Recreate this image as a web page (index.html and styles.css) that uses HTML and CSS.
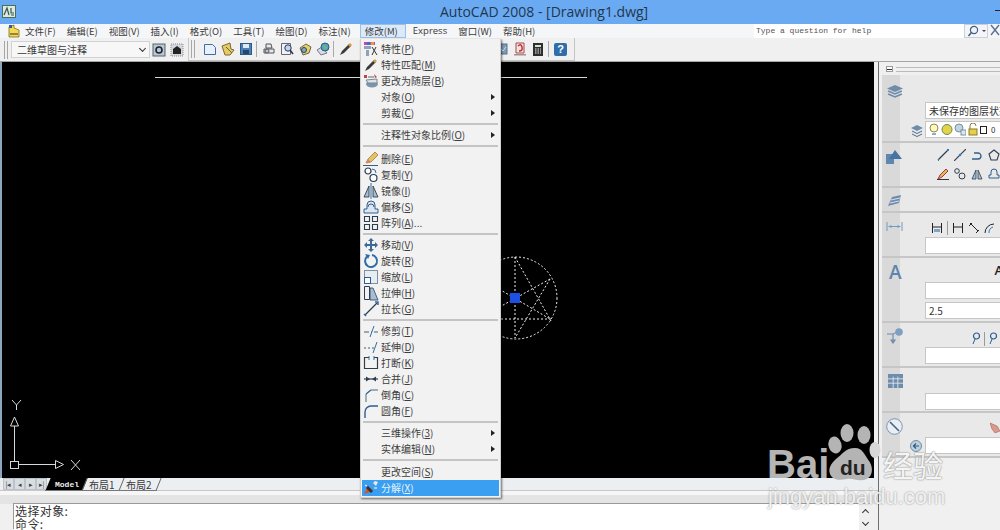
FILE: index.html
```html
<!DOCTYPE html>
<html lang="zh">
<head>
<meta charset="utf-8">
<title>AutoCAD 2008</title>
<link rel="stylesheet" href="styles.css">
</head>
<body>
<div class="app">
  <header class="title">
    <svg class="app-icon" width="14" height="13" viewBox="0 0 14 13"><rect x=".5" y=".5" width="13" height="12" fill="#dfe8e0" stroke="#47705a"/><path d="M2 10 5 3l2 7M9 3v5h3M9 10h3" fill="none" stroke="#2f5a48" stroke-width="1.2"/></svg>
    <span class="title-text">AutoCAD 2008 - [Drawing1.dwg]</span>
    <span class="win-min"></span>
  </header>

  <nav class="menubar">
    <svg class="doc-icon" width="14" height="14" viewBox="0 0 14 14"><path d="M2 3 7 1v3l5 2v7H2z" fill="#f5d94a" stroke="#6b5a1a" stroke-width=".7"/><path d="M2 1h3v3H2z" fill="#3a5a9a"/><path d="M3 10h8" stroke="#333"/></svg>
    <span class="mi">文件(F)</span>
    <span class="mi">编辑(E)</span>
    <span class="mi">视图(V)</span>
    <span class="mi">插入(I)</span>
    <span class="mi">格式(O)</span>
    <span class="mi">工具(T)</span>
    <span class="mi">绘图(D)</span>
    <span class="mi">标注(N)</span>
    <span class="mi mi-open">修改(M)</span>
    <span class="mi mi-en">Express</span>
    <span class="mi">窗口(W)</span>
    <span class="mi">帮助(H)</span>
    <div class="help">
      <span class="help-input">Type a question for help</span>
      <span class="help-btn"><svg width="12" height="12" viewBox="0 0 12 12"><circle cx="7" cy="5" r="3.6" fill="#eef3fb" stroke="#47607e" stroke-width="1.2"/><path d="M4.4 7.6 1.5 11" stroke="#47607e" stroke-width="1.6"/></svg><i class="tiny-down"></i></span>
      <span class="help-btn2"><svg width="10" height="12" viewBox="0 0 10 12"><path d="M1 1 9 11M9 1 1 11" stroke="#5a7390" stroke-width="1.4"/></svg></span>
    </div>
  </nav>

  <div class="toolbars">
    <div class="tb tb-first">
      <span class="grip"></span>
      <div class="combo"><span>二维草图与注释</span><i class="chev"></i></div>
      <svg class="ti" width="14" height="14" viewBox="0 0 14 14"><rect x="1" y="1" width="12" height="12" fill="#b9c6d4" stroke="#566"/><circle cx="7" cy="7" r="3" fill="none" stroke="#223" stroke-width="1.6"/></svg>
      <svg class="ti" width="14" height="14" viewBox="0 0 14 14"><rect x="1" y="1" width="12" height="12" fill="#d4d8dc" stroke="#889" stroke-dasharray="1 1"/><path d="M3 11V6l4-3 4 3v5z" fill="#222"/></svg>
    </div>
    <div class="tb tb-second">
      <span class="grip"></span>
      <svg class="ti" width="14" height="14" viewBox="0 0 14 14"><path d="M1.500 2.500h8l3 3v7h-11z" fill="#e8f1fb" stroke="#3b6ea5"/></svg>
      <svg class="ti" width="14" height="14" viewBox="0 0 14 14"><path d="M1 4l8-3 1 6 3 1-4 5H4z" fill="#e9c866" stroke="#7a6a30"/><path d="M5 5l6 6" stroke="#3a7a3a"/></svg>
      <svg class="ti" width="14" height="14" viewBox="0 0 14 14"><rect x="1.500" y="1.500" width="11" height="11" fill="#4f7fb5" stroke="#2b5a8a"/><rect x="4" y="2" width="6" height="4" fill="#dfeaf5"/><rect x="4" y="8" width="6" height="4" fill="#24476e"/></svg>
      <i class="sep"></i>
      <svg class="ti" width="14" height="14" viewBox="0 0 14 14"><path d="M4 2h5l1 4H4zM2 7h10v4H2z" fill="#e6e9ee" stroke="#555"/><circle cx="5" cy="9" r="2" fill="#b9c6d4" stroke="#555"/></svg>
      <svg class="ti" width="14" height="14" viewBox="0 0 14 14"><path d="M1.500 1.500h9v11h-9z" fill="#eef2f6" stroke="#667"/><circle cx="8" cy="6" r="3.200" fill="#bcd6ee" stroke="#335"/><path d="M10 8l3 4" stroke="#335" stroke-width="1.500"/></svg>
      <svg class="ti" width="14" height="14" viewBox="0 0 14 14"><path d="M2 6l6-4 5 3-2 6-6 2z" fill="#e7cf60" stroke="#665"/><circle cx="6" cy="8" r="2.500" fill="#7fa7cc" stroke="#345"/></svg>
      <svg class="ti" width="14" height="14" viewBox="0 0 14 14"><path d="M1 8l5-3 5 6-6 2z" fill="#d9dde2" stroke="#778"/><circle cx="9" cy="5" r="4" fill="#55a3c9" stroke="#2a5d7a"/><path d="M7 3l4 2-2 3z" fill="#85b35a"/></svg>
      <i class="sep"></i>
      <svg class="ti" width="14" height="14" viewBox="0 0 14 14"><path d="M1 13l2-4 7-7 2 2-7 7z" fill="#3b3b3b"/><path d="M9 3l2-2 2 2-2 2z" fill="#d79a3a"/></svg>
      <span class="tb-hidden"></span>
      <svg class="ti ti-cut" width="14" height="14" viewBox="0 0 14 14"><rect x="1" y="2" width="12" height="10" fill="#7c9bb8" stroke="#56718c"/><path d="M2 10l4-4 3 3 3-4" fill="none" stroke="#cfe0ee"/></svg>
      <svg class="ti" width="14" height="14" viewBox="0 0 14 14"><path d="M3 1h8v10H3z" fill="#f5e4e4" stroke="#a04a4a"/><path d="M1 12h12v1.500H1z" fill="#aa8e8e"/><path d="M5 4q3-3 4 1t-3 4" fill="none" stroke="#c2302f" stroke-width="1.500"/></svg>
      <svg class="ti" width="14" height="14" viewBox="0 0 14 14"><rect x="2" y="1" width="10" height="13" fill="#2e2e2e"/><rect x="4" y="3" width="6" height="2" fill="#cfe5cf"/><path d="M4 7h6M4 9h6M4 11h6" stroke="#eee" stroke-dasharray="1.500 1"/></svg>
      <i class="sep"></i>
      <span class="help-q">?</span>
    </div>
  </div>

  <div class="main">
    <div class="work">
      <section class="canvas">
        <svg class="drawing" width="872" height="416" viewBox="0 0 872 416">
          <path d="M153 15.500h432" stroke="#d8d8d8" fill="none"/>
          <g fill="none" stroke="#f0f0f0" stroke-dasharray="2 2">
            <circle cx="514" cy="236" r="41"/>
            <path d="M513 195v81M513 195l36 64M548 217l-35 59M475 257h75M548 217l-72 40M480 217l68 40"/>
          </g>
          <rect x="508" y="231" width="10" height="10" fill="#1d4fe0"/>
          <g fill="none" stroke="#d8d8d8">
            <path d="M12.500 364v35M8.500 364h8L12.500 355zM16 402.500h37M53.500 398.500v8l8-4z"/>
            <rect x="8.500" y="399.500" width="8" height="7"/>
            <path d="M10 338l4.500 5 4.500-5M14.500 343v5M69 398l9 10M78 398l-9 10"/>
          </g>
        </svg>
      </section>
      <div class="tabs">
        <div class="nav-btns">
          <b class="nb">|◂</b><b class="nb">◂</b><b class="nb">▸</b><b class="nb">▸|</b>
        </div>
        <span class="tab tab-active">Model</span>
        <span class="tab">布局1</span>
        <span class="tab">布局2</span>
      </div>
      <div class="cmd-gap"></div>
      <div class="command">
        <div class="cmd-text">选择对象:<br>命令:</div>
        <div class="cmd-scroll"><i class="chev chev-up"></i><i class="chev"></i></div>
      </div>
    </div>

    <aside class="panel">
      <div class="panel-head"><span class="collapse"></span><span class="head-grip"></span></div>

      <div class="sect s-layers">
        <div class="strip"><svg width="16" height="14" viewBox="0 0 14 14" preserveAspectRatio="none"><path d="M7 1l7 3.500L7 8 0 4.500z" fill="#6e8cab"/><path d="M1 7l6 3 6-3M1 10l6 3 6-3" fill="none" stroke="#6e8cab" stroke-width="1.500"/></svg></div>
        <div class="body">
          <div class="field f-top">未保存的图层状态</div>
          <div class="layer-row">
            <svg class="layer-ico" width="14" height="14" viewBox="0 0 14 14"><path d="M7 2l6 3-6 3-6-3z" fill="#6e8cab"/><path d="M2 8l5 2.500L12 8M2 11l5 2.500L12 11" fill="none" stroke="#4c6a88"/></svg>
            <div class="field layer-field">
              <svg width="12" height="13" viewBox="0 0 12 13"><circle cx="6" cy="5" r="4" fill="#fff8c0" stroke="#8a8a50"/><path d="M4 10h4v2H4z" fill="#9ab"/></svg>
              <svg width="12" height="13" viewBox="0 0 12 13"><circle cx="6" cy="6.500" r="5" fill="#e3d34a" stroke="#6a8a50"/></svg>
              <svg width="12" height="13" viewBox="0 0 12 13"><circle cx="5" cy="5" r="4" fill="#c2d4e2" stroke="#78909c"/><rect x="7" y="7" width="5" height="5" fill="#dde6ec" stroke="#78909c"/></svg>
              <svg width="12" height="13" viewBox="0 0 12 13"><path d="M3 6V3a3 3 0 0 1 6 0" fill="none" stroke="#8a7a30"/><rect x="2" y="6" width="8" height="6" fill="#e6d044" stroke="#8a7a30"/></svg>
              <i class="swatch"></i><span class="layer-name">0</span>
            </div>
          </div>
        </div>
      </div>

      <div class="sect s-draw">
        <div class="strip"><svg width="17" height="15" viewBox="0 0 17 15"><path d="M0 5h8v10H0z" fill="#5f86ad"/><path d="M9 1l7 9H3z" fill="#4674a2"/></svg></div>
        <div class="body icons-body">
          <div class="icon-row">
            <svg width="12" height="12" viewBox="0 0 12 12"><path d="M1 11 11 1" stroke="#2e3e50" stroke-width="1.200"/><path d="M1 11h1M10 1h2" stroke="#2e7bc4" stroke-width="2"/></svg>
            <svg width="12" height="12" viewBox="0 0 12 12"><path d="M0 12 12 0" stroke="#2e3e50" stroke-width="1.200"/><circle cx="6" cy="6" r="1.200" fill="#2e7bc4"/></svg>
            <svg width="12" height="12" viewBox="0 0 12 12"><path d="M1 10h6a3 3 0 0 0 0-6H3" fill="none" stroke="#2e5e90" stroke-width="1.300"/></svg>
            <svg width="12" height="12" viewBox="0 0 12 12"><path d="M6 1l5 4-2 6H3L1 5z" fill="none" stroke="#2e3e50" stroke-width="1.100"/></svg>
          </div>
          <div class="icon-row">
            <svg width="12" height="12" viewBox="0 0 12 12"><path d="M1 11l2-4 6-6 2 2-6 6z" fill="#e0bc4a" stroke="#a35"/><path d="M0 11.500h12" stroke="#333"/></svg>
            <svg width="12" height="12" viewBox="0 0 12 12"><circle cx="3" cy="3" r="2.300" fill="none" stroke="#2e3e50"/><circle cx="8" cy="8" r="3" fill="none" stroke="#2e3e50"/></svg>
            <svg width="12" height="12" viewBox="0 0 12 12"><path d="M5 2 1 11h4zM7 2l4 9H7z" fill="#a7bed3" stroke="#2e3e50" stroke-width=".8"/></svg>
            <svg width="12" height="12" viewBox="0 0 12 12"><path d="M1 10V7h2V4a3 3 0 0 1 6 0v3h2v3z" fill="none" stroke="#2e5e90"/></svg>
          </div>
        </div>
      </div>

      <div class="sect s-hatch">
        <div class="strip"><svg width="15" height="13" viewBox="0 0 15 13"><path d="M1 12 5 3l9-2-2 8z" fill="#6e8cab"/><path d="M4 6l9-2M3 9l9-2" stroke="#dde"/></svg></div>
        <div class="body"></div>
      </div>

      <div class="sect s-dim">
        <div class="strip"><svg width="17" height="9" viewBox="0 0 16 9"><path d="M.5 0v9M15.500 0v9M2 4.500h12" stroke="#6e9cc4"/><path d="M2 4.500 5 3v3zM14 4.500 11 3v3z" fill="#6e9cc4"/></svg></div>
        <div class="body">
          <div class="icon-row dim-row">
            <svg width="12" height="12" viewBox="0 0 12 12"><path d="M1.500 1v10M10.500 1v10M2 5h8" stroke="#222"/><rect x="3" y="7" width="6" height="3" fill="#7ea4c8"/></svg>
            <i class="vsep"></i>
            <svg width="12" height="12" viewBox="0 0 12 12"><path d="M1.500 1v10M10.500 1v10M2 5h8" stroke="#222"/></svg>
            <svg width="12" height="12" viewBox="0 0 12 12"><path d="M2 1l8 8M1 4l3-3M8 11l3-3" stroke="#222"/></svg>
            <svg width="12" height="12" viewBox="0 0 12 12"><path d="M1 11a9 9 0 0 1 9-9" fill="none" stroke="#222"/><path d="M5 11a6 6 0 0 1 4-6" fill="none" stroke="#2e7bc4"/></svg>
          </div>
          <div class="field f-dim"></div>
        </div>
      </div>

      <div class="sect s-text">
        <div class="strip"><span class="strip-a">A</span></div>
        <div class="body">
          <div class="text-a">A</div>
          <div class="field f-t1"></div>
          <div class="field f-t2">2.5</div>
        </div>
      </div>

      <div class="sect s-lead">
        <div class="strip"><svg width="18" height="16" viewBox="0 0 18 16"><path d="M1 6h6v9M7 15 5 12h4z" fill="none" stroke="#6e8cab" stroke-width="1.200"/><path d="M7 6l4-2" stroke="#6e8cab"/><circle cx="13" cy="4" r="3.800" fill="#7f9fc0"/></svg></div>
        <div class="body">
          <div class="icon-row lead-row">
            <svg width="10" height="14" viewBox="0 0 10 14"><circle cx="5.500" cy="4" r="3" fill="none" stroke="#2e5e90" stroke-width="1.200"/><path d="M4 7 2 12" stroke="#2e5e90"/></svg>
            <i class="vsep"></i>
            <svg width="10" height="14" viewBox="0 0 10 14"><circle cx="5.500" cy="4" r="3" fill="none" stroke="#2e5e90" stroke-width="1.200"/><path d="M4 7 2 12" stroke="#2e5e90"/></svg>
          </div>
          <div class="field f-lead"></div>
        </div>
      </div>

      <div class="sect s-table">
        <div class="strip"><svg width="15" height="14" viewBox="0 0 16 16" preserveAspectRatio="none"><rect width="16" height="16" fill="#6e8cab"/><path d="M0 5.500h16M0 10.500h16M5.500 3v13M10.500 3v13" stroke="#dde6ee"/></svg></div>
        <div class="body"><div class="field f-table"></div></div>
      </div>

      <div class="sect s-tool">
        <div class="strip"><svg width="17" height="17" viewBox="0 0 17 17"><circle cx="8.500" cy="8.500" r="7.800" fill="#e8eef4" stroke="#7a95ae"/><path d="M4 4l9 9" stroke="#45647f" stroke-width="1.600"/></svg></div>
        <div class="body">
          <svg class="hand" width="10" height="12" viewBox="0 0 10 12"><path d="M0 2l7 3 3 5-5 2-3-4z" fill="#d99a8c" stroke="#a8625a" stroke-width=".6"/></svg>
          <div class="tool-row">
            <svg class="tool-ico" width="12" height="12" viewBox="0 0 12 12"><circle cx="6" cy="6" r="5.500" fill="#bcd0de" stroke="#6f8ca3"/><path d="M9 6H4M6 3.500 3.500 6 6 8.500" fill="none" stroke="#2d5a7d" stroke-width="1.200"/></svg>
            <div class="field f-tool"></div>
          </div>
        </div>
      </div>
    </aside>
  </div>

  <div class="menu">
    <div class="mrow"><svg width="16" height="16" viewBox="0 0 16 16"><path d="M1 1h11v3H1z" fill="#c845b8"/><path d="M4 1h3v3H4z" fill="#3a6fd0"/><path d="M8 1h3v3H8z" fill="#e0a030"/><path d="M1 5h7v3H1zM3 9h3v6H3z" fill="#8fa3b5"/><path d="M9 6l5 8M13 6l-4 8" stroke="#333"/></svg><span>特性(<u>P</u>)</span></div>
    <div class="mrow"><svg width="16" height="16" viewBox="0 0 16 16"><path d="M2 14l2-4 7-7 2 2-7 7z" fill="#3a3a3a"/><path d="M10 4l2-2 2 2-2 2z" fill="#d8a14a"/></svg><span>特性匹配(<u>M</u>)</span></div>
    <div class="mrow"><svg width="16" height="16" viewBox="0 0 16 16"><ellipse cx="9" cy="11" rx="6" ry="3.500" fill="#7c93a8"/><path d="M3 7l11-1v4H5z" fill="#dbe2e8" stroke="#78899a"/><path d="M1 2h3v3H1zM11 1l3 3-2 1z" fill="#c04444"/><path d="M5 4h6" stroke="#666"/></svg><span>更改为随层(<u>B</u>)</span></div>
    <div class="mrow"><i class="noicon"></i><span>对象(<u>O</u>)</span><i class="arrow"></i></div>
    <div class="mrow"><i class="noicon"></i><span>剪裁(<u>C</u>)</span><i class="arrow"></i></div>
    <div class="msep"></div>
    <div class="mrow"><i class="noicon"></i><span>注释性对象比例(<u>O</u>)</span><i class="arrow"></i></div>
    <div class="msep msep-8"></div>
    <div class="mrow"><svg width="16" height="16" viewBox="0 0 16 16"><path d="M3 12l2-4 7-7 3 3-7 7z" fill="#e4c460" stroke="#a06a30" stroke-width=".7"/><path d="M3 12l2-4 3 3z" fill="#d9876a"/><path d="M0 14.500h15" stroke="#3e5d7c"/></svg><span>删除(<u>E</u>)</span></div>
    <div class="mrow"><svg width="16" height="16" viewBox="0 0 16 16"><circle cx="5" cy="4" r="3" fill="#fff" stroke="#2e3e50" stroke-width="1.200"/><circle cx="10.500" cy="11" r="3.500" fill="#fff" stroke="#2e3e50" stroke-width="1.200"/><path d="M9 2q4 0 4 4" fill="none" stroke="#2e6ea5"/></svg><span>复制(<u>Y</u>)</span></div>
    <div class="mrow"><svg width="16" height="16" viewBox="0 0 16 16"><path d="M6 3 1 14h5zM10 3l5 11h-5z" fill="#a6bdd2" stroke="#2e3e50" stroke-width=".9"/><path d="M8 0v16" stroke="#2e6ea5"/></svg><span>镜像(<u>I</u>)</span></div>
    <div class="mrow"><svg width="16" height="16" viewBox="0 0 16 16"><path d="M1 14v-4h3V6a4 4 0 0 1 8 0v4h3v4z" fill="#dbe6f0" stroke="#2e5e90"/><path d="M5 8a3 3 0 0 1 6 0" fill="none" stroke="#2e5e90"/></svg><span>偏移(<u>S</u>)</span></div>
    <div class="mrow"><svg width="16" height="16" viewBox="0 0 16 16"><path d="M1.500 1.500h5v5h-5zM9.500 1.500h5v5h-5zM1.500 9.500h5v5h-5zM9.500 9.500h5v5h-5z" fill="none" stroke="#2e3e50" stroke-width="1.100"/></svg><span>阵列(<u>A</u>)...</span></div>
    <div class="msep"></div>
    <div class="mrow"><svg width="16" height="16" viewBox="0 0 16 16"><path d="M8 1l3 3H9v3h3V5l3 3-3 3V9H9v3h2l-3 3-3-3h2V9H4v2L1 8l3-3v2h3V4H5z" fill="#3f6a94"/></svg><span>移动(<u>V</u>)</span></div>
    <div class="mrow"><svg width="16" height="16" viewBox="0 0 16 16"><path d="M4 3.600a6 6 0 1 0 5-1.500" fill="none" stroke="#2f6ca8" stroke-width="2"/><path d="M2 1l5 1-2 4z" fill="#2f6ca8"/></svg><span>旋转(<u>R</u>)</span></div>
    <div class="mrow"><svg width="16" height="16" viewBox="0 0 16 16"><rect x="1.500" y="1.500" width="13" height="13" fill="#e6edf3" stroke="#7d92a6"/><rect x="1.500" y="8.500" width="6" height="6" fill="#fff" stroke="#2e5e90"/></svg><span>缩放(<u>L</u>)</span></div>
    <div class="mrow"><svg width="16" height="16" viewBox="0 0 16 16"><path d="M7 3h3l5 12H7z" fill="#a6bdd2" stroke="#2e3e50" stroke-width=".8"/><path d="M1.500 1.500h5v13h-5z" fill="none" stroke="#2e3e50"/></svg><span>拉伸(<u>H</u>)</span></div>
    <div class="mrow"><svg width="16" height="16" viewBox="0 0 16 16"><path d="M2 14 14 2" stroke="#2e3e50" stroke-width="1.300"/><path d="M1 13l2 2M12 1h3v3" stroke="#2e6ea5" stroke-width="1.500" fill="none"/></svg><span>拉长(<u>G</u>)</span></div>
    <div class="msep"></div>
    <div class="mrow"><svg width="16" height="16" viewBox="0 0 16 16"><path d="M1 9h5M8 9h1M11 9h4" stroke="#4a5a6a"/><path d="M7 14l4-11" stroke="#2e6ea5"/></svg><span>修剪(<u>T</u>)</span></div>
    <div class="mrow"><svg width="16" height="16" viewBox="0 0 16 16"><path d="M1 9h2M5 9h2M9 9h2" stroke="#4a5a6a"/><path d="M10 14l4-11" stroke="#2e6ea5"/></svg><span>延伸(<u>D</u>)</span></div>
    <div class="mrow"><svg width="16" height="16" viewBox="0 0 16 16"><path d="M6 2.500H1.500v11h13v-11H11" fill="none" stroke="#2e3e50" stroke-width="1.200"/><path d="M6 1v4M11 1v4" stroke="#2e6ea5"/></svg><span>打断(<u>K</u>)</span></div>
    <div class="mrow"><svg width="16" height="16" viewBox="0 0 16 16"><path d="M1 8h14" stroke="#2e3e50" stroke-width="1.200"/><path d="M7 8 3 5.500v5zM9 8l4-2.500v5z" fill="#2e3e50"/></svg><span>合并(<u>J</u>)</span></div>
    <div class="mrow"><svg width="16" height="16" viewBox="0 0 16 16"><path d="M3 15V7l5-4h7" fill="none" stroke="#55687a"/><path d="M3 7l5-4" stroke="#2e6ea5" stroke-width="1.300"/></svg><span>倒角(<u>C</u>)</span></div>
    <div class="mrow"><svg width="16" height="16" viewBox="0 0 16 16"><path d="M2 15V9a6 6 0 0 1 6-6h7" fill="none" stroke="#2e5e90" stroke-width="1.400"/></svg><span>圆角(<u>F</u>)</span></div>
    <div class="msep"></div>
    <div class="mrow"><i class="noicon"></i><span>三维操作(<u>3</u>)</span><i class="arrow"></i></div>
    <div class="mrow"><i class="noicon"></i><span>实体编辑(<u>N</u>)</span><i class="arrow"></i></div>
    <div class="msep msep-7"></div>
    <div class="mrow"><i class="noicon"></i><span>更改空间(<u>S</u>)</span></div>
    <div class="mrow msel"><svg width="16" height="16" viewBox="0 0 16 16"><path d="M1 14l4-8 5 5z" fill="#d9512a"/><path d="M5 6l5 5-2 2-5-5z" fill="#333"/><path d="M10 3l2-2 3 1-2 4z" fill="#e8e8e8"/><path d="M2 5l2 1M11 8h3" stroke="#fff"/></svg><span>分解(<u>X</u>)</span></div>
  </div>

  <div class="watermark">
    <svg class="paw" width="60" height="62" viewBox="0 0 60 62">
      <ellipse cx="11" cy="25" rx="6.500" ry="8.500" fill="#b4b4b4" transform="rotate(-15 11 25)"/>
      <ellipse cx="23" cy="13" rx="6.500" ry="9" fill="#b4b4b4"/>
      <ellipse cx="40" cy="15" rx="6.500" ry="9" fill="#b4b4b4"/>
      <ellipse cx="51" cy="30" rx="5.500" ry="8" fill="#d8d8d8"/>
      <path d="M31 28c8 0 10 8 14 13 5 7 4 18-6 19-6 1-11-2-16-1-7 1-14 2-17-5-2-6 1-10 6-15 7-5 9-11 19-11z" fill="#b4b4b4"/>
    </svg>
    <span class="w-bai">Bai</span>
    <span class="w-du">du</span>
    <span class="w-jy">经验</span>
    <span class="w-url">jingyan.baidu.com</span>
  </div>
</div>
</body>
</html>
```

FILE: styles.css
```css
* { box-sizing: border-box; }
html, body { margin: 0; padding: 0; }
body { font-family: "Noto Sans CJK SC", "Noto Sans", sans-serif; font-size: 10px; color: #3a3a3a; background: #f0f0f0; }
svg { display: block; flex: none; }
u { text-decoration: underline; }
i, b { font-style: normal; }

.app { position: relative; width: 1000px; height: 530px; overflow: hidden; display: flex; flex-direction: column; background: #f0f0f0; }

.title { height: 24px; flex: none; background: #6aaaf2; display: flex; align-items: center; padding: 0 0 0 2px; position: relative; }
.app-icon { margin-top: -1px; }
.title-text { position: absolute; left: 440px; top: 3px; font: 14px/18px "Open Sans", sans-serif; color: #24374d; white-space: nowrap; }
.win-min { position: absolute; right: 0; top: 10px; width: 5px; height: 1px; background: #223; }

.menubar { height: 14px; flex: none; background: #f5f6f7; display: flex; align-items: center; padding-left: 7px; line-height: 14px; position: relative; font-size: 9.5px; }
.doc-icon { margin-right: 4px; }
.mi { margin-right: 11px; white-space: nowrap; height: 14px; }
.mi-open { background: #dbe9f8; box-shadow: inset 0 0 0 1px #9cbfe2; margin-left: -2px; padding: 0 8px 0 5px; margin-right: 7px; }
.mi-en { font-family: "Open Sans", sans-serif; font-size: 9.5px; }
.help { position: absolute; left: 754px; top: 0; right: 0; height: 14px; display: flex; background: #fff; }
.help-input { width: 212px; font: 8px/14px "Liberation Mono", monospace; padding-left: 2px; color: #555; }
.help-btn { width: 24px; background: #f3f5f8; border: 1px solid #c8d0d8; display: flex; align-items: center; padding-left: 2px; gap: 3px; }
.tiny-down { width: 0; height: 0; border: 2px solid transparent; border-top: 2px solid #445; margin-top: 2px; }
.help-btn2 { flex: 1; padding-left: 2px; background: #f3f5f8; }

.toolbars { height: 24px; flex: none; background: #f0f0f0; display: flex; border-bottom: 1px solid #a5a5a5; }
.tb { height: 23px; display: flex; align-items: center; }
.tb-first { width: 189px; padding-left: 4px; box-shadow: inset -1px 0 #c9c9c9; }
.tb-second { width: 386px; padding-left: 2px; border-right: 1px solid #c4c4c4; border-bottom: 1px solid #c4c4c4; }
.grip { width: 4px; height: 18px; border-left: 1px solid #a6a6a6; border-right: 1px solid #a6a6a6; margin-right: 3px; flex: none; }
.combo { width: 139px; height: 17px; background: #f7f7f7; border: 1px solid #d2d2d2; display: flex; align-items: center; justify-content: space-between; padding: 0 4px 0 5px; margin-right: 2px; line-height: 15px; flex: none; }
.chev { width: 5px; height: 5px; border-right: 1.500px solid #333; border-bottom: 1.500px solid #333; transform: rotate(45deg); margin-top: -2px; display: block; }
.chev-up { transform: rotate(225deg); margin-top: 2px; }
.ti { margin-right: 4px; }
.sep { width: 1px; height: 16px; background: #aaa; margin: 0 5px 0 -1px; flex: none; }
.tb-second .grip { margin-right: 8px; }
.tb-hidden { width: 137px; flex: none; }
.ti-cut { margin-right: 5px; }
.help-q { width: 13px; height: 13px; background: #2f6ea8; color: #fff; font: bold 11px/13px "Liberation Sans", sans-serif; text-align: center; border-radius: 2px; }

.main { flex: 1; display: flex; min-height: 0; }
.work { width: 879px; flex: none; display: flex; flex-direction: column; border-right: 1px solid #6e6e6e; }
.canvas { height: 416px; flex: none; background: #000; margin: 0 4px 0 2px; position: relative; box-shadow: -2px 0 #8ca6bf; }
.drawing { position: absolute; left: 0; top: 0; }

.tabs { height: 13px; flex: none; display: flex; align-items: center; padding-left: 3px; background: #eceff2; border-bottom: 1px solid #c8c8c8; }
.nav-btns { display: flex; width: 45px; flex: none; }
.nb { width: 11px; height: 12px; background: #d8dde2; border: 1px solid #bcc2c8; font-size: 7px; line-height: 10px; text-align: center; color: #444; font-weight: normal; }
.tab { position: relative; isolation: isolate; width: 37px; padding-left: 4px; height: 13px; line-height: 13px; white-space: nowrap; }
.tab::before { content: ""; position: absolute; inset: 0; z-index: -1; transform: skewX(-22deg); border-right: 1px solid #666; border-bottom: 1px solid #777; }
.tab-active { color: #eee; font: bold 8px/13px "Liberation Mono", monospace; padding-left: 7px; }
.tab-active::before { background: #000; }
.cmd-gap { height: 13px; flex: none; background: linear-gradient(#f6f6f6 4px, #e4e4e4 4px); }
.command { flex: 1; display: flex; margin-left: 14px; margin-right: 6px; background: #fff; box-shadow: -1px -1px #999; min-height: 0; }
.cmd-text { flex: 1; font-size: 12px; line-height: 13px; color: #333; padding: 0 0 0 1px; white-space: nowrap; letter-spacing: .4px; }
.cmd-scroll { width: 13px; background: #f0f0f0; display: flex; flex-direction: column; align-items: center; gap: 7px; padding-top: 4px; }

.panel { flex: 1; background: #f0f0f0; padding-left: 3px; min-width: 0; }
.panel-head { height: 13px; display: flex; align-items: center; gap: 3px; padding: 1px 0 0 4px; }
.collapse { width: 7px; height: 6px; background: #fff; border: 1px solid #999; display: block; background-image: linear-gradient(#333, #333); background-size: 5px 1px; background-position: center; background-repeat: no-repeat; }
.head-grip { flex: 1; height: 5px; border-top: 1px solid #bbb; border-bottom: 1px solid #bbb; }
.sect { display: flex; background: #e9e9e9; border-bottom: 2px solid #c6c6c6; flex: none; }
.strip { width: 18px; flex: none; background: #d9d9d9; display: flex; justify-content: flex-start; padding-left: 5px; }
.strip svg, .strip-a { margin-right: -8px; }
.body { flex: 1; min-width: 0; position: relative; }
.field { height: 17px; margin-left: 25px; background: #fff; border: 1px solid #c6c6c6; border-right: 0; padding-left: 3px; line-height: 15px; white-space: nowrap; overflow: hidden; color: #333; }

.s-layers { height: 68px; }
.s-layers .strip { padding-top: 9px; }
.s-layers .body { padding-top: 27px; }
.layer-row { display: flex; align-items: center; margin-top: 2px; padding-left: 10px; }
.layer-ico { flex: none; }
.layer-field { flex: 1; margin-left: 1px; display: flex; align-items: center; padding-left: 2px; gap: 1px; min-width: 0; }
.swatch { width: 7px; height: 8px; background: #fff; border: 1px solid #222; flex: none; }
.layer-name { margin-left: 3px; font-size: 8px; }

.s-draw { height: 45px; }
.s-draw .strip { padding-top: 6px; padding-left: 4px; }
.icons-body { padding: 6px 0 0 37px; display: flex; flex-direction: column; gap: 7px; }
.icon-row { display: flex; gap: 5px; align-items: center; }
.s-hatch { height: 25px; }
.s-hatch .strip { padding-top: 6px; }
.s-dim { height: 45px; }
.s-dim .strip { padding-top: 9px; padding-left: 4px; }
.dim-row { padding: 6px 0 0 31px; gap: 4px; height: 24px; }
.vsep { width: 1px; height: 14px; background: #999; flex: none; }
.s-text { height: 65px; }
.s-text .strip { padding: 3px 0 0 7px; }
.strip-a { font: 600 19px/22px "Open Sans", sans-serif; color: #5d85ad; }
.text-a { text-align: right; font: 600 13px/18px "Open Sans", sans-serif; color: #222; padding: 3px 0 0; margin-right: -3px; height: 24px; }
.f-t2 { margin-top: 3px; }
.s-lead { height: 45px; }
.s-lead .strip { padding-top: 5px; padding-left: 4px; }
.lead-row { padding: 7px 0 0 71px; height: 24px; gap: 3px; }
.s-table { height: 45px; }
.s-table .strip { padding-top: 6px; padding-left: 6px; }
.f-table { margin-top: 25px; }
.s-tool { height: 45px; }
.s-tool .strip { padding-top: 5px; padding-left: 4px; }
.hand { position: absolute; right: 0; top: 8px; }
.tool-row { display: flex; align-items: center; padding: 24px 0 0 10px; }
.tool-ico { flex: none; }
.tool-row .f-tool { flex: 1; margin-left: 3px; }

.menu { position: absolute; left: 360px; top: 39px; width: 141px; height: 459px; background: #f2f2f2; border: 1px solid #d0d0d0; border-top: 0; box-shadow: 1px 1px 2px rgba(0,0,0,.55); padding: 2px 1px 0; z-index: 2; }
.mrow { height: 16px; display: flex; align-items: center; gap: 2px; padding-left: 1px; line-height: 16px; position: relative; white-space: nowrap; color: #3d3d3d; }
.noicon { width: 16px; flex: none; }
.arrow { position: absolute; right: 4px; top: 5px; width: 0; height: 0; border-left: 4px solid #222; border-top: 3px solid transparent; border-bottom: 3px solid transparent; }
.msep { height: 6px; margin: 0; position: relative; }
.msep-8 { height: 8px; }
.msep-7 { height: 7px; }
.msep::after { content: ""; position: absolute; left: 1px; right: 1px; top: 2px; height: 2px; background: #c4c4c4; }
.msel { background: #3a9ff0; color: #e8f2fc; }

.watermark { position: absolute; left: 760px; top: 420px; width: 240px; height: 110px; z-index: 3; pointer-events: none; font-family: "Liberation Sans", sans-serif; }
.paw { position: absolute; left: 64px; top: 0; }
.w-bai { position: absolute; left: 7px; top: 22px; font: bold 40px/44px "Liberation Sans", sans-serif; color: #b4b4b4; }
.w-du { position: absolute; left: 80px; top: 36px; font: bold 21px/24px "Liberation Sans", sans-serif; color: #222; }
.w-jy { position: absolute; left: 123px; top: 26px; font: 30px/36px "Noto Sans CJK SC", sans-serif; color: rgba(255,255,255,.92); text-shadow: 0 0 2px #888, 0 0 1px #999; }
.w-url { position: absolute; left: 8px; top: 64px; font: 22px/26px "Liberation Sans", sans-serif; color: rgba(255,255,255,.85); text-shadow: 0 0 2px #888; }
```
